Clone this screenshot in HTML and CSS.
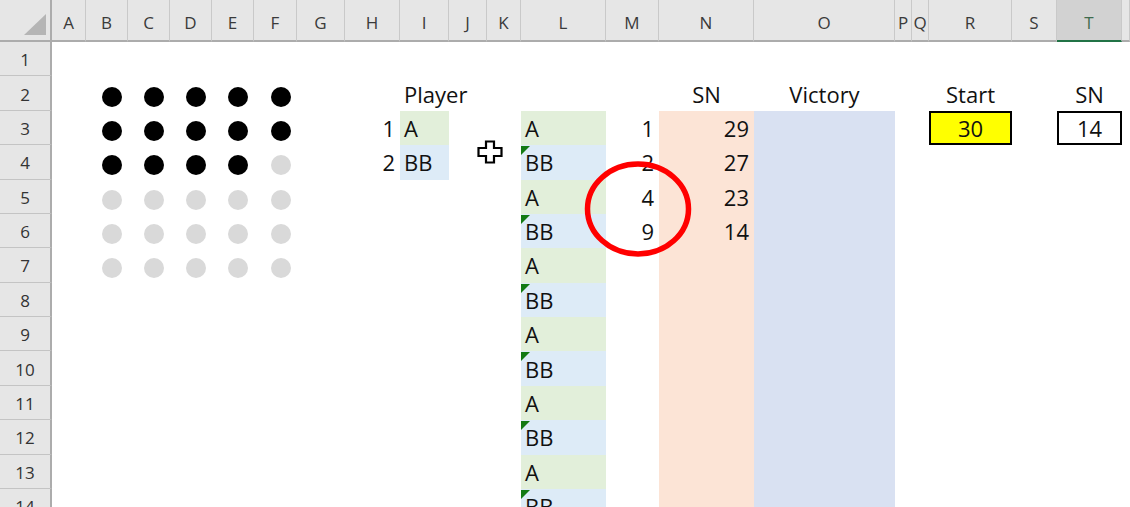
FILE: index.html
```html
<!DOCTYPE html>
<html>
<head>
<meta charset="utf-8">
<link rel="stylesheet" href="styles.css">
</head>
<body>
<div class="sheet">
  <div class="head">
    <div class="hc corner"><svg width="22" height="21" viewBox="0 0 22 21"><polygon points="22,0 22,21 0,21" fill="#b5b5b5"/></svg></div>
    <div class="hc">A</div><div class="hc">B</div><div class="hc">C</div><div class="hc">D</div><div class="hc">E</div><div class="hc">F</div><div class="hc">G</div><div class="hc">H</div><div class="hc">I</div><div class="hc">J</div><div class="hc">K</div><div class="hc">L</div><div class="hc">M</div><div class="hc">N</div><div class="hc">O</div><div class="hc">P</div><div class="hc">Q</div><div class="hc">R</div><div class="hc">S</div><div class="hc sel">T</div><div class="hc"></div>
  </div>

  <div class="row"><div class="rh">1</div></div>

  <div class="row"><div class="rh">2</div>
    <div class="cell dotc cB"><span class="dot"></span></div>
    <div class="cell dotc cC"><span class="dot"></span></div>
    <div class="cell dotc cD"><span class="dot"></span></div>
    <div class="cell dotc cE"><span class="dot"></span></div>
    <div class="cell dotc cF"><span class="dot"></span></div>
    <div class="cell cI">Player</div>
    <div class="cell c cN">SN</div>
    <div class="cell c cO">Victory</div>
    <div class="cell c cR">Start</div>
    <div class="cell c cT">SN</div>
  </div>

  <div class="row"><div class="rh">3</div>
    <div class="cell dotc cB"><span class="dot"></span></div>
    <div class="cell dotc cC"><span class="dot"></span></div>
    <div class="cell dotc cD"><span class="dot"></span></div>
    <div class="cell dotc cE"><span class="dot"></span></div>
    <div class="cell dotc cF"><span class="dot"></span></div>
    <div class="cell r cH">1</div>
    <div class="cell grn cI">A</div>
    <div class="cell grn cL">A</div>
    <div class="cell r cM">1</div>
    <div class="cell r pch cN">29</div>
    <div class="cell lav cO"></div>
    <div class="cell c box ybox cR">30</div>
    <div class="cell c box cT">14</div>
  </div>

  <div class="row"><div class="rh">4</div>
    <div class="cell dotc cB"><span class="dot"></span></div>
    <div class="cell dotc cC"><span class="dot"></span></div>
    <div class="cell dotc cD"><span class="dot"></span></div>
    <div class="cell dotc cE"><span class="dot"></span></div>
    <div class="cell dotc cF"><span class="dot g"></span></div>
    <div class="cell r cH">2</div>
    <div class="cell blu cI">BB</div>
    <div class="cell blu cL"><span class="flag"></span>BB</div>
    <div class="cell r cM">2</div>
    <div class="cell r pch cN">27</div>
    <div class="cell lav cO"></div>
  </div>

  <div class="row"><div class="rh">5</div>
    <div class="cell dotc cB"><span class="dot g"></span></div>
    <div class="cell dotc cC"><span class="dot g"></span></div>
    <div class="cell dotc cD"><span class="dot g"></span></div>
    <div class="cell dotc cE"><span class="dot g"></span></div>
    <div class="cell dotc cF"><span class="dot g"></span></div>
    <div class="cell grn cL">A</div>
    <div class="cell r cM">4</div>
    <div class="cell r pch cN">23</div>
    <div class="cell lav cO"></div>
  </div>

  <div class="row"><div class="rh">6</div>
    <div class="cell dotc cB"><span class="dot g"></span></div>
    <div class="cell dotc cC"><span class="dot g"></span></div>
    <div class="cell dotc cD"><span class="dot g"></span></div>
    <div class="cell dotc cE"><span class="dot g"></span></div>
    <div class="cell dotc cF"><span class="dot g"></span></div>
    <div class="cell blu cL"><span class="flag"></span>BB</div>
    <div class="cell r cM">9</div>
    <div class="cell r pch cN">14</div>
    <div class="cell lav cO"></div>
  </div>

  <div class="row"><div class="rh">7</div>
    <div class="cell dotc cB"><span class="dot g"></span></div>
    <div class="cell dotc cC"><span class="dot g"></span></div>
    <div class="cell dotc cD"><span class="dot g"></span></div>
    <div class="cell dotc cE"><span class="dot g"></span></div>
    <div class="cell dotc cF"><span class="dot g"></span></div>
    <div class="cell grn cL">A</div>
    <div class="cell pch cN"></div>
    <div class="cell lav cO"></div>
  </div>

  <div class="row"><div class="rh">8</div>
    <div class="cell blu cL"><span class="flag"></span>BB</div>
    <div class="cell pch cN"></div>
    <div class="cell lav cO"></div>
  </div>

  <div class="row"><div class="rh">9</div>
    <div class="cell grn cL">A</div>
    <div class="cell pch cN"></div>
    <div class="cell lav cO"></div>
  </div>

  <div class="row"><div class="rh">10</div>
    <div class="cell blu cL"><span class="flag"></span>BB</div>
    <div class="cell pch cN"></div>
    <div class="cell lav cO"></div>
  </div>

  <div class="row"><div class="rh">11</div>
    <div class="cell grn cL">A</div>
    <div class="cell pch cN"></div>
    <div class="cell lav cO"></div>
  </div>

  <div class="row"><div class="rh">12</div>
    <div class="cell blu cL"><span class="flag"></span>BB</div>
    <div class="cell pch cN"></div>
    <div class="cell lav cO"></div>
  </div>

  <div class="row"><div class="rh">13</div>
    <div class="cell grn cL">A</div>
    <div class="cell pch cN"></div>
    <div class="cell lav cO"></div>
  </div>

  <div class="row"><div class="rh">14</div>
    <div class="cell blu cL"><span class="flag"></span>BB</div>
    <div class="cell pch cN"></div>
    <div class="cell lav cO"></div>
  </div>

  <svg class="cursor" width="26" height="24" viewBox="0 0 26 24">
    <polygon points="9,1.5 17,1.5 17,8 24.5,8 24.5,16 17,16 17,22.5 9,22.5 9,16 1.5,16 1.5,8 9,8" fill="#fff" stroke="#000" stroke-width="2.2" stroke-linejoin="miter"/>
  </svg>

  <svg class="ring" width="108" height="96" viewBox="0 0 108 96">
    <ellipse cx="54" cy="48" rx="50.5" ry="45" fill="none" stroke="#ff0000" stroke-width="5.5"/>
  </svg>
</div>
</body>
</html>
```

FILE: styles.css
```css
body {
  margin: 0;
  background: #fff;
}

.sheet {
  position: relative;
  width: 1130px;
  height: 507px;
  overflow: hidden;
  font-family: "Open Sans", "DejaVu Sans", sans-serif;
  background: #fff;
}

.head,
.row {
  display: grid;
  grid-template-columns: 52px 34px 42px 42px 42px 42px 43px 48px 55px 49px 38px 34px 85px 53px 95px 141px 17px 17px 83px 45px 65px 1fr;
}

.head {
  height: 42px;
}

.row {
  height: 34.375px;
}

.hc {
  box-sizing: border-box;
  background: #e6e6e6;
  border-right: 1px solid #c9c9c9;
  border-bottom: 2px solid #acacac;
  display: flex;
  align-items: center;
  justify-content: center;
  font-size: 17px;
  color: #3a3a3a;
  overflow: hidden;
  padding-top: 4px;
}

.corner {
  border-right: 2px solid #acacac;
  justify-content: flex-end;
  align-items: flex-end;
  padding: 0 4px 5px 0;
}

.sel {
  background: #d2d2d2;
  border-bottom-color: #217346;
  color: #3f6b4e;
}

.rh {
  grid-column: 1;
  box-sizing: border-box;
  background: #e6e6e6;
  border-right: 2px solid #acacac;
  border-bottom: 1px solid #c4c4c4;
  display: flex;
  align-items: center;
  justify-content: center;
  font-size: 17px;
  color: #333;
  padding-top: 2px;
}

.cell {
  box-sizing: border-box;
  display: flex;
  align-items: center;
  padding: 0 4px;
  font-size: 22px;
  color: #111;
  white-space: nowrap;
  min-width: 0;
  position: relative;
}

.r { justify-content: flex-end; padding-right: 5px; }
.c { justify-content: center; }

.cB { grid-column: 3; }
.cC { grid-column: 4; }
.cD { grid-column: 5; }
.cE { grid-column: 6; }
.cF { grid-column: 7; }
.cH { grid-column: 9; }
.cI { grid-column: 10; }
.cL { grid-column: 13; }
.cM { grid-column: 14; }
.cN { grid-column: 15; }
.cO { grid-column: 16; }
.cR { grid-column: 19; }
.cT { grid-column: 21; }

.dotc {
  justify-content: center;
  padding: 6px 0 0 10px;
}

.dot {
  width: 20px;
  height: 20px;
  border-radius: 50%;
  background: #000;
}

.dot.g {
  background: #d9d9d9;
}

.grn { background: #e2efda; }
.blu { background: #ddebf7; }
.pch { background: #fce4d6; }
.lav { background: #d9e1f2; }

.box {
  border: 2px solid #000;
  background: #fff;
}

.ybox {
  background: #ffff00;
}

.flag {
  position: absolute;
  left: 0;
  top: 1px;
  width: 0;
  height: 0;
  border-top: 9px solid #137a13;
  border-right: 9px solid transparent;
}

.cursor {
  position: absolute;
  left: 477px;
  top: 140px;
}

.ring {
  position: absolute;
  left: 584px;
  top: 161px;
}
```
